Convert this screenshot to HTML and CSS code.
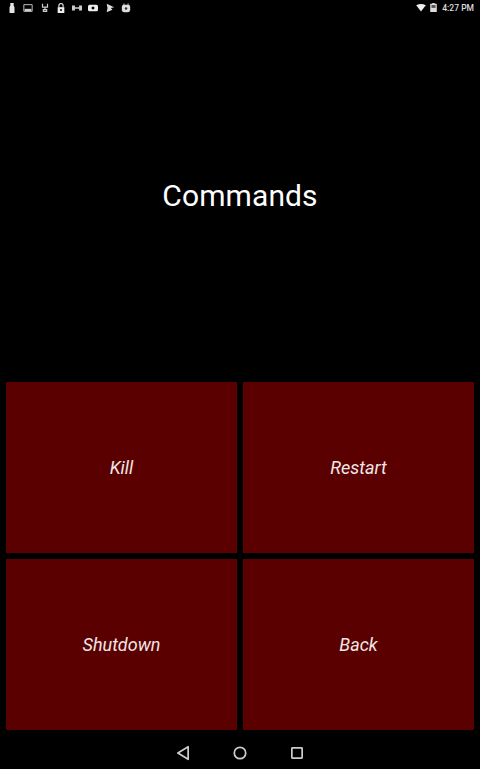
FILE: index.html
```html
<!DOCTYPE html>
<html lang="en">
<head>
    <meta charset="UTF-8">
    <meta name="viewport" content="width=device-width, initial-scale=1.0">
    <title>Commands</title>
    <link rel="stylesheet" href="styles.css">
</head>
<body>
    <div class="status-bar">
        <div class="status-icons">
            <svg class="icon" viewBox="0 0 12 14"><path d="M4 1h4v3l1 2v7H3V6l1-2z" fill="#e4e4e4"/></svg>
            <svg class="icon" viewBox="0 0 12 14"><path d="M1 3h10v8H1z" fill="none" stroke="#bbb" stroke-width="1.2"/><path d="M2 8h8v3H2z" fill="#ccc"/></svg>
            <svg class="icon" viewBox="0 0 12 14"><path d="M3 2v4h6V2M6 6v3M4 9h4v2H4z" fill="none" stroke="#ccc" stroke-width="1.4"/></svg>
            <svg class="icon" viewBox="0 0 12 14"><path d="M3.500 6V4a2.500 2.500 0 0 1 5 0v2" fill="none" stroke="#eee" stroke-width="1.300"/><path d="M2 6h8v7H2z" fill="#eee"/><circle cx="6" cy="9.500" r="1.200" fill="#000"/></svg>
            <svg class="icon" viewBox="0 0 12 14"><path d="M0 4h3.500v6H0zM8.500 4H12v6H8.500zM3.500 6h5v2h-5z" fill="#ccc"/></svg>
            <svg class="icon" viewBox="0 0 12 14"><rect x="0" y="3" width="12" height="8" rx="2" fill="#eee"/><circle cx="6" cy="7" r="1.800" fill="#000"/></svg>
            <svg class="icon" viewBox="0 0 12 14"><path d="M2 2l9 4-4 1 2 2-7 3 1-5z" fill="#ddd"/></svg>
            <svg class="icon" viewBox="0 0 12 14"><rect x="1" y="3" width="10" height="9" rx="2.500" fill="#ddd"/><path d="M3.500 1.500v3M8.500 1.500v3" stroke="#ddd"/><circle cx="6" cy="7.500" r="1.500" fill="#333"/></svg>
        </div>
        <div class="status-right">
            <svg class="wifi" viewBox="0 0 12 10"><path d="M0 1.500Q6-1.500 12 1.500L6 9.500z" fill="#eee"/></svg>
            <svg class="battery" viewBox="0 0 8 11"><path d="M2.500 0h3v1H8v10H0V1h2.500z" fill="#ddd"/><path d="M1.500 2.500h5V6h-5z" fill="#555"/></svg>
            <span class="clock">4:27 PM</span>
        </div>
    </div>

    <div class="header">
        <h1 class="title">Commands</h1>
    </div>

    <div class="buttons">
        <button class="btn">Kill</button>
        <button class="btn">Restart</button>
        <button class="btn">Shutdown</button>
        <button class="btn">Back</button>
    </div>

    <div class="nav-bar">
        <svg class="nav-icon" viewBox="0 0 14 14"><path d="M11.500 1.500v11L2.500 7z" fill="none" stroke="#ccc" stroke-width="1.500" stroke-linejoin="round"/></svg>
        <svg class="nav-icon" viewBox="0 0 14 14"><circle cx="7" cy="7" r="5" fill="none" stroke="#ccc" stroke-width="1.500"/></svg>
        <svg class="nav-icon" viewBox="0 0 14 14"><rect x="2.500" y="2.500" width="9" height="9" rx="0.500" fill="none" stroke="#ccc" stroke-width="1.500"/></svg>
    </div>
</body>
</html>
```

FILE: styles.css
```css
html, body {
    height: 100%;
}

body {
    display: flex;
    flex-direction: column;
    background-color: #000;
    margin: 0;
    font-family: Roboto, sans-serif;
    color: #fff;
}

.status-bar {
    display: flex;
    justify-content: space-between;
    align-items: center;
    height: 15px;
    padding: 0 6px 0 7px;
}

.status-icons {
    display: flex;
    align-items: center;
    gap: 6.3px;
}

.icon {
    width: 10px;
    height: 12px;
}

.status-right {
    display: flex;
    align-items: center;
}

.wifi {
    width: 10px;
    height: 8px;
    margin-right: 4px;
}

.battery {
    width: 7px;
    height: 9px;
    margin-right: 5px;
}

.clock {
    font-size: 8.5px;
    font-weight: 500;
    color: #ddd;
}

.header {
    display: flex;
    justify-content: center;
    align-items: center;
    height: 361px;
}

.title {
    margin: 0;
    font-size: 30px;
    font-weight: 400;
    letter-spacing: 0.1px;
}

.buttons {
    display: grid;
    grid-template-columns: 1fr 1fr;
    grid-template-rows: 171px 171px;
    gap: 6px;
    padding: 6px 6px 0;
}

.btn {
    background-color: #5a0000;
    border: none;
    padding: 0;
    font-family: Roboto, sans-serif;
    font-size: 18px;
    font-style: italic;
    color: #f0e6e6;
}

.nav-bar {
    flex: 1;
    display: flex;
    justify-content: center;
    align-items: center;
    gap: 41px;
    padding-top: 6px;
}

.nav-icon {
    width: 16px;
    height: 16px;
}
```
